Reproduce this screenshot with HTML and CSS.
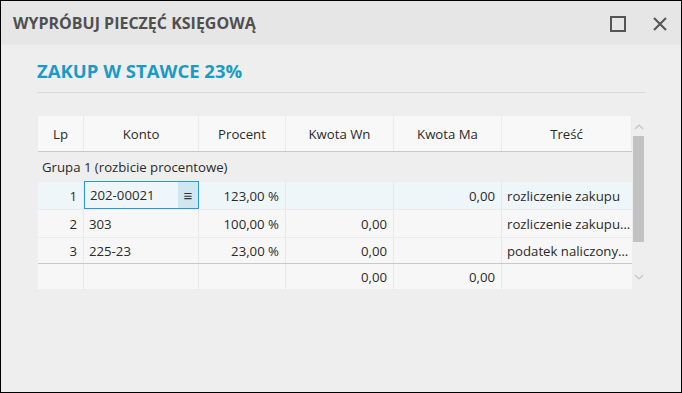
FILE: index.html
```html
<!DOCTYPE html>
<html lang="pl">
<head>
<meta charset="utf-8">
<link rel="stylesheet" href="styles.css">
</head>
<body>
<div class="window">
  <div class="titlebar">
    <div class="title">WYPRÓBUJ PIECZĘĆ KSIĘGOWĄ</div>
    <div class="controls">
      <svg class="ico" width="16" height="16" viewBox="0 0 16 16"><rect x="1" y="1" width="14" height="14" fill="none" stroke="#555" stroke-width="2"/></svg>
      <svg class="ico" width="16" height="16" viewBox="0 0 16 16"><path d="M2 2 L14 14 M14 2 L2 14" stroke="#555" stroke-width="2" fill="none"/></svg>
    </div>
  </div>
  <div class="content">
    <h1 class="heading">ZAKUP W STAWCE 23%</h1>
    <div class="sep"></div>
    <div class="tablewrap">
      <div class="grid">
        <div class="row head">
          <div class="c">Lp</div><div class="c">Konto</div><div class="c">Procent</div><div class="c">Kwota Wn</div><div class="c">Kwota Ma</div><div class="c last">Treść</div>
        </div>
        <div class="group">Grupa 1 (rozbicie procentowe)</div>
        <div class="row data sel">
          <div class="c r">1</div>
          <div class="c edit"><span class="ev">202-00021</span><span class="btn">&#8801;</span></div>
          <div class="c r">123,00 %</div><div class="c r"></div><div class="c r">0,00</div><div class="c l last">rozliczenie zakupu</div>
        </div>
        <div class="row data">
          <div class="c r">2</div><div class="c l">303</div><div class="c r">100,00 %</div><div class="c r">0,00</div><div class="c r"></div><div class="c l last">rozliczenie zakupu…</div>
        </div>
        <div class="row data end">
          <div class="c r">3</div><div class="c l">225-23</div><div class="c r">23,00 %</div><div class="c r">0,00</div><div class="c r"></div><div class="c l last">podatek naliczony…</div>
        </div>
        <div class="row data sum">
          <div class="c r"></div><div class="c l"></div><div class="c r"></div><div class="c r">0,00</div><div class="c r">0,00</div><div class="c l last"></div>
        </div>
      </div>
      <div class="scroll">
        <svg class="arr" width="10" height="6" viewBox="0 0 10 6"><path d="M1 5 L5 1 L9 5" stroke="#c4c4c4" stroke-width="1.2" fill="none"/></svg>
        <div class="thumb"></div>
        <div class="track"></div>
        <svg class="arr" width="10" height="6" viewBox="0 0 10 6"><path d="M1 1 L5 5 L9 1" stroke="#c4c4c4" stroke-width="1.2" fill="none"/></svg>
      </div>
    </div>
  </div>
</div>
</body>
</html>
```
FILE: styles.css
```css
html, body { margin: 0; padding: 0; }
body { font-family: "Open Sans", "Noto Sans", sans-serif; }
.window {
  width: 682px; height: 393px; box-sizing: border-box;
  border: 1px solid #000; background: #eeeeee;
  display: flex; flex-direction: column;
}
.titlebar {
  height: 44px; background: #e6e6e6;
  display: flex; align-items: center; justify-content: space-between;
  padding: 0 13px 0 12px;
}
.title { font-weight: 700; font-size: 16px; color: #505050; }
.controls { display: flex; gap: 26px; align-items: center; padding-top: 1px; }
.ico { display: block; }
.content { padding: 14px 36px 0 36px; }
.heading {
  margin: 0; font-size: 18.5px; font-weight: 700; color: #1a9bc6; line-height: 24px;
}
.sep { height: 1px; background: #d9d9d9; margin-top: 9px; }
.tablewrap { display: flex; margin-top: 23px; margin-left: 1px; }
.grid { width: 594px; font-size: 13.2px; color: #2a2a2a; }
.row { display: grid; grid-template-columns: 46px 115px 87px 108px 108px 130px; }
.c { border-right: 1px solid #e8e8e8; display: flex; align-items: center; padding: 0 6px; overflow: hidden; white-space: nowrap; }
.c.last { border-right: none; }
.head { height: 35px; background: #f8f8f8; border-bottom: 1px solid #c8c8c8; }
.head .c { justify-content: center; border-right: 1px solid #ebebeb; }
.group { height: 30px; display: flex; align-items: center; padding-left: 4px; color: #2a2a2a; }
.data { height: 27px; background: #f7f7f7; border-bottom: 1px solid #ebebeb; }
.data .r { justify-content: flex-end; }
.data .l { justify-content: flex-start; padding-left: 5px; }
.data.sel { background: #eef6fa; border-bottom-color: #e6edf1; }
.data.end { height: 25px; border-bottom: 1px solid #c8c8c8; }
.data.sum { height: 25px; border-bottom: none; }
.c.edit {
  border: 1px solid #2b99d6; padding: 0 0 0 5px; justify-content: space-between;
  background: #eef6fa; margin: -1px 0 0 0;
}
.btn {
  width: 20px; height: 100%; background: #cfe6f3; display: flex; align-items: center; justify-content: center;
  font-size: 15px; color: #333;
}
.scroll { width: 14px; display: flex; flex-direction: column; align-items: center; padding-top: 8px; }
.arr { display: block; }
.thumb { width: 11px; height: 106px; background: #c2c2c2; margin-top: 6px; }
.track { height: 30px; }
.scroll .arr:last-child { margin-top: 2px; }
```
